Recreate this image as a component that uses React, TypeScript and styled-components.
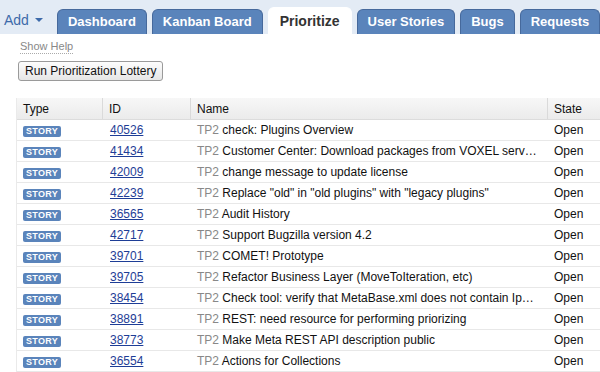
import React from 'react';
import styled, { createGlobalStyle } from 'styled-components';

const GlobalStyle = createGlobalStyle`
  body {
    margin: 0;
    background: #fff;
    font-family: "Liberation Sans", Arial, sans-serif;
  }
`;

interface Story {
  id: string;
  name: string;
  state: string;
}

const stories: Story[] = [
  { id: '40526', name: 'check: Plugins Overview', state: 'Open' },
  { id: '41434', name: 'Customer Center: Download packages from VOXEL serv\u2026', state: 'Open' },
  { id: '42009', name: 'change message to update license', state: 'Open' },
  { id: '42239', name: 'Replace "old" in "old plugins" with "legacy plugins"', state: 'Open' },
  { id: '36565', name: 'Audit History', state: 'Open' },
  { id: '42717', name: 'Support Bugzilla version 4.2', state: 'Open' },
  { id: '39701', name: 'COMET! Prototype', state: 'Open' },
  { id: '39705', name: 'Refactor Business Layer (MoveToIteration, etc)', state: 'Open' },
  { id: '38454', name: 'Check tool: verify that MetaBase.xml does not contain Ip\u2026', state: 'Open' },
  { id: '38891', name: 'REST: need resource for performing priorizing', state: 'Open' },
  { id: '38773', name: 'Make Meta REST API description public', state: 'Open' },
  { id: '36554', name: 'Actions for Collections', state: 'Open' },
];

const tabs = ['Dashboard', 'Kanban Board', 'Prioritize', 'User Stories', 'Bugs', 'Requests'];

const TabBar = styled.div`
  display: flex;
  align-items: flex-end;
  height: 34px;
  padding-left: 4px;
  background: #e3ebf5;
  gap: 5px;
  white-space: nowrap;
`;

const AddMenu = styled.div`
  display: flex;
  align-items: center;
  align-self: center;
  margin-top: 6px;
  margin-right: 9px;
  color: #3d6aaa;
  font-size: 14px;
  gap: 6px;
`;

const Caret = styled.span`
  width: 0;
  height: 0;
  border-left: 4px solid transparent;
  border-right: 4px solid transparent;
  border-top: 4px solid #3d6aaa;
`;

const Tab = styled.div<{ $active?: boolean }>`
  height: ${(p) => (p.$active ? 26 : 24)}px;
  line-height: ${(p) => (p.$active ? 26 : 24)}px;
  padding: 0 ${(p) => (p.$active ? 11 : 10)}px;
  border-radius: 6px 6px 0 0;
  font-weight: bold;
  font-size: ${(p) => (p.$active ? 14 : 13)}px;
  color: ${(p) => (p.$active ? '#333' : '#fff')};
  background: ${(p) => (p.$active ? '#fff' : '#5a84bb')};
  border: 1px solid ${(p) => (p.$active ? '#fff' : '#46699c')};
  border-bottom: none;
`;

const Content = styled.div`
  padding: 2px 0 0 16px;
`;

const HelpLink = styled.span`
  display: inline-block;
  margin-left: 4px;
  font-size: 11px;
  color: #888;
  border-bottom: 1px dotted #aaa;
  line-height: 13px;
`;

const LotteryButton = styled.button`
  display: block;
  margin: 7px 0 0 2px;
  height: 20px;
  padding: 0 6px;
  font-family: "Liberation Sans", Arial, sans-serif;
  font-size: 12px;
  color: #111;
  background: linear-gradient(#fdfdfd, #e6e6e6);
  border: 1px solid #9a9a9a;
  border-radius: 3px;
`;

const Table = styled.div`
  margin-top: 17px;
  border-left: 1px solid #eaeaea;
`;

const Row = styled.div<{ $header?: boolean }>`
  display: grid;
  grid-template-columns: 86px 88px 357px 1fr;
  height: ${(p) => (p.$header ? 21 : 20)}px;
  align-items: center;
  border-bottom: 1px solid ${(p) => (p.$header ? '#dcdcdc' : '#e8e8e8')};
  background: ${(p) => (p.$header ? 'linear-gradient(#f7f7f7, #ebebeb)' : '#fff')};
  font-size: 12px;
  color: #111;
`;

const HeadCell = styled.div`
  height: 100%;
  display: flex;
  align-items: center;
  padding-left: 6px;
  border-right: 1px solid #dadada;
  &:last-child {
    border-right: none;
  }
`;

const Cell = styled.div`
  padding-left: 6px;
  white-space: nowrap;
  overflow: hidden;
  text-overflow: ellipsis;
`;

const Badge = styled.span`
  display: inline-block;
  width: 38px;
  height: 11px;
  line-height: 11px;
  text-align: center;
  border-radius: 2px;
  background: #5a84bb;
  color: #fff;
  font-size: 9px;
  font-weight: bold;
  letter-spacing: 0.3px;
`;

const IdLink = styled.a`
  color: #1e3d96;
  text-decoration: underline;
  margin-left: 1px;
`;

const Project = styled.span`
  color: #888;
`;

export default function App() {
  return (
    <>
      <GlobalStyle />
      <TabBar>
        <AddMenu>
          Add <Caret />
        </AddMenu>
        {tabs.map((t) => (
          <Tab key={t} $active={t === 'Prioritize'}>
            {t}
          </Tab>
        ))}
      </TabBar>
      <Content>
        <HelpLink>Show Help</HelpLink>
        <LotteryButton>Run Prioritization Lottery</LotteryButton>
        <Table>
          <Row $header>
            <HeadCell>Type</HeadCell>
            <HeadCell>ID</HeadCell>
            <HeadCell>Name</HeadCell>
            <HeadCell>State</HeadCell>
          </Row>
          {stories.map((s) => (
            <Row key={s.id}>
              <Cell>
                <Badge>STORY</Badge>
              </Cell>
              <Cell>
                <IdLink href="#">{s.id}</IdLink>
              </Cell>
              <Cell>
                <Project>TP2</Project> {s.name}
              </Cell>
              <Cell>{s.state}</Cell>
            </Row>
          ))}
        </Table>
      </Content>
    </>
  );
}
